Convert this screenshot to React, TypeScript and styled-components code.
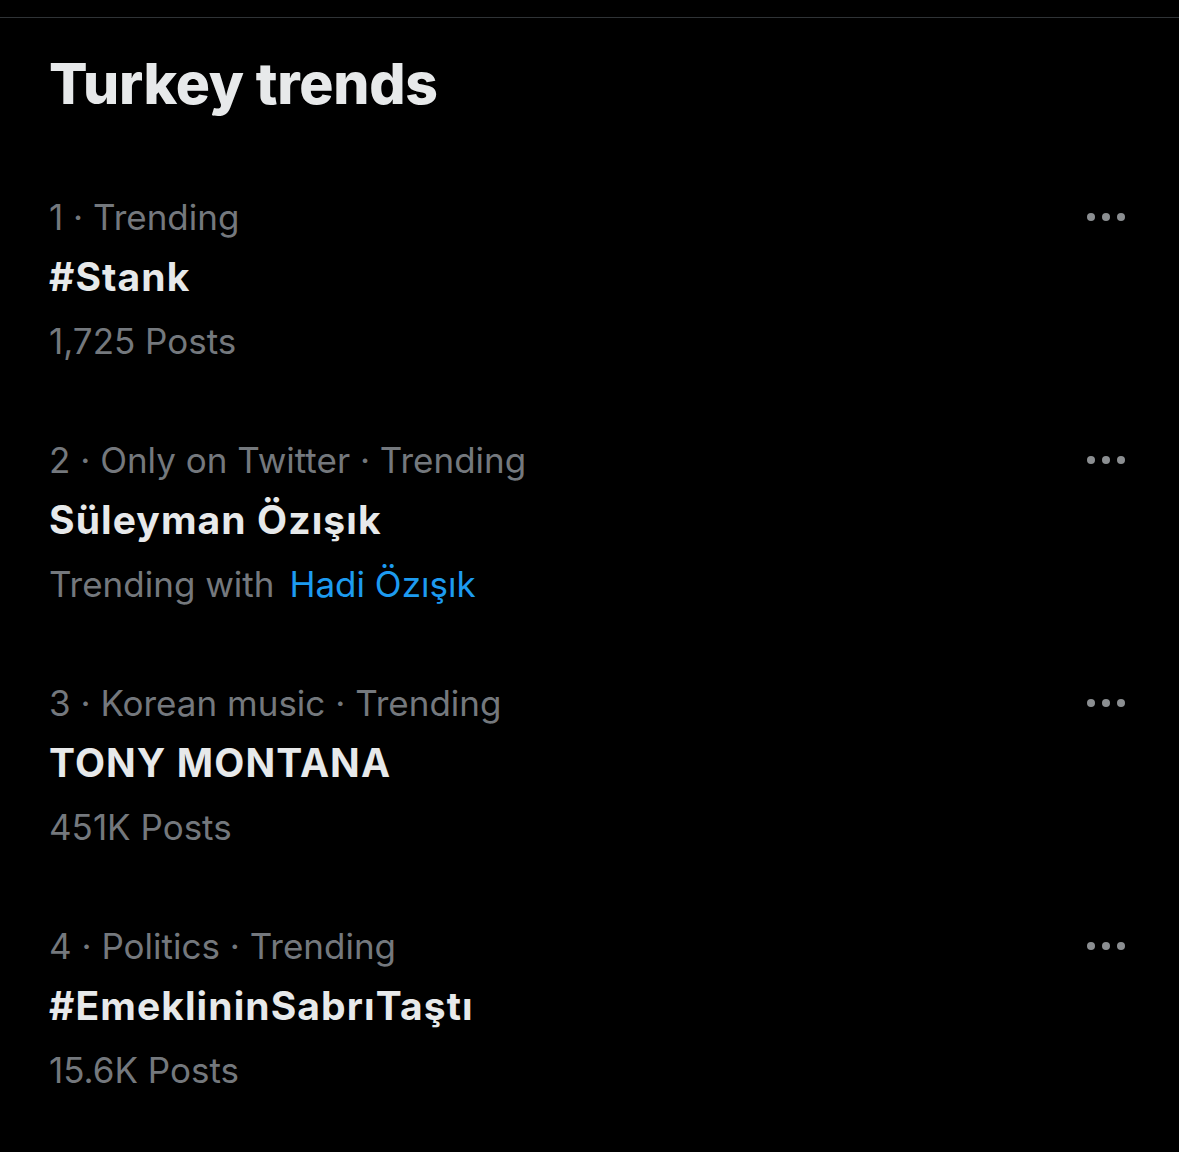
import React from "react";
import styled, { createGlobalStyle } from "styled-components";

const GlobalStyle = createGlobalStyle`
  html, body {
    margin: 0;
    padding: 0;
    background: #000;
  }
  body {
    font-family: Inter, "Noto Sans", sans-serif;
    -webkit-font-smoothing: antialiased;
  }
`;

const Page = styled.div`
  background: #000;
  min-height: 1152px;
  padding-top: 17px;
  box-sizing: border-box;
`;

const Panel = styled.section`
  border-top: 1px solid #2f3336;
  padding: 0 54px 0 49px;
`;

const Title = styled.h2`
  margin: 0;
  padding: 33px 0 0;
  height: 100px;
  box-sizing: border-box;
  font-size: 57px;
  font-weight: 800;
  letter-spacing: -0.3px;
  line-height: 66px;
  color: #e7e9ea;
`;

const List = styled.div`
  display: flex;
  flex-direction: column;
  padding-top: 68px;
`;

const Row = styled.div`
  display: flex;
  align-items: flex-start;
  justify-content: space-between;
  height: 243px;
`;

const Body = styled.div`
  display: flex;
  flex-direction: column;
`;

const Meta = styled.div`
  font-size: 35px;
  line-height: 62px;
  color: #74787d;
`;

const Name = styled.div`
  font-size: 39px;
  font-weight: 700;
  letter-spacing: 1.1px;
  line-height: 58px;
  margin-bottom: 4px;
  color: #e7e9ea;
`;

const Sub = styled.div`
  display: flex;
  gap: 15px;
  font-size: 35px;
  line-height: 62px;
  color: #74787d;
`;

const Link = styled.span`
  color: #1d9bf0;
`;

const More = styled.button`
  display: flex;
  gap: 7px;
  padding: 0;
  margin-top: 27px;
  background: none;
  border: none;
  cursor: pointer;
`;

const Dot = styled.span`
  width: 8px;
  height: 8px;
  border-radius: 50%;
  background: #8b8e91;
`;

type Trend = {
  rank: number;
  context?: string;
  name: string;
  posts?: string;
  with?: string;
};

const trends: Trend[] = [
  { rank: 1, name: "#Stank", posts: "1,725 Posts" },
  { rank: 2, context: "Only on Twitter", name: "Süleyman Özışık", with: "Hadi Özışık" },
  { rank: 3, context: "Korean music", name: "TONY MONTANA", posts: "451K Posts" },
  { rank: 4, context: "Politics", name: "#EmeklininSabrıTaştı", posts: "15.6K Posts" },
];

export default function App() {
  return (
    <Page>
      <GlobalStyle />
      <Panel>
        <Title>Turkey trends</Title>
        <List>
          {trends.map((t) => (
            <Row key={t.rank}>
              <Body>
                <Meta>
                  {t.rank} · {t.context ? `${t.context} · ` : ""}Trending
                </Meta>
                <Name>{t.name}</Name>
                {t.with ? (
                  <Sub>
                    Trending with <Link>{t.with}</Link>
                  </Sub>
                ) : (
                  <Sub>{t.posts}</Sub>
                )}
              </Body>
              <More aria-label="More">
                <Dot />
                <Dot />
                <Dot />
              </More>
            </Row>
          ))}
        </List>
      </Panel>
    </Page>
  );
}
